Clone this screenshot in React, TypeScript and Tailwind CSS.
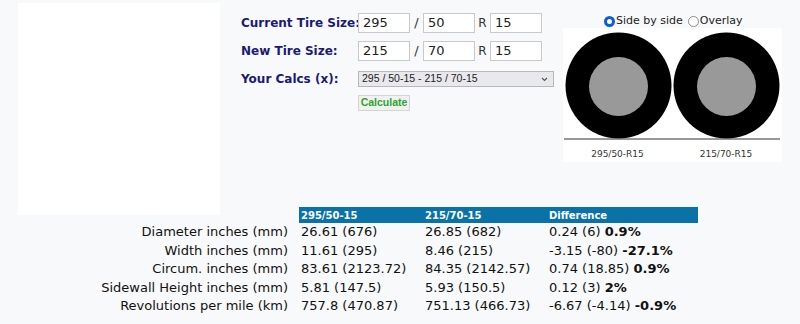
import React from "react";

const rows: { label: string; a: string; b: string; d: string; pct: string }[] = [
  { label: "Diameter inches (mm)", a: "26.61 (676)", b: "26.85 (682)", d: "0.24 (6)", pct: "0.9%" },
  { label: "Width inches (mm)", a: "11.61 (295)", b: "8.46 (215)", d: "-3.15 (-80)", pct: "-27.1%" },
  { label: "Circum. inches (mm)", a: "83.61 (2123.72)", b: "84.35 (2142.57)", d: "0.74 (18.85)", pct: "0.9%" },
  { label: "Sidewall Height inches (mm)", a: "5.81 (147.5)", b: "5.93 (150.5)", d: "0.12 (3)", pct: "2%" },
  { label: "Revolutions per mile (km)", a: "757.8 (470.87)", b: "751.13 (466.73)", d: "-6.67 (-4.14)", pct: "-0.9%" },
];

function Box({ v }: { v: string }) {
  return (
    <div className="flex h-[20px] w-[52px] items-center border border-[#c9c9c9] bg-white pl-[4px] text-[13px] text-[#222]">
      {v}
    </div>
  );
}

function SizeRow({ label, a, b, c, className }: { label: string; a: string; b: string; c: string; className?: string }) {
  return (
    <div className={"flex h-[20px] items-center " + (className ?? "")}>
      <div className="w-[117px] text-[12px] font-bold text-[#1b1b74] whitespace-nowrap">{label}</div>
      <Box v={a} />
      <div className="w-[13px] text-center text-[13px] text-[#333]">/</div>
      <Box v={b} />
      <div className="w-[15px] text-center text-[12px] text-[#333]">R</div>
      <Box v={c} />
    </div>
  );
}

export default function App() {
  return (
    <div className="h-[324px] w-[800px] overflow-hidden bg-[#f8f9fa] font-['DejaVu_Sans',Verdana,sans-serif] text-black">
      <div className="flex h-[207px] items-start">
        <div className="ml-[18px] mt-[3px] h-[212px] w-[202px] shrink-0 bg-white" />

        <div className="ml-[21px] mt-[13px] shrink-0">
          <SizeRow label="Current Tire Size:" a="295" b="50" c="15" />
          <SizeRow label="New Tire Size:" a="215" b="70" c="15" className="mt-[8px]" />
          <div className="mt-[10px] flex h-[16px] items-center">
            <div className="w-[117px] text-[12px] font-bold text-[#1b1b74] whitespace-nowrap">Your Calcs (x):</div>
            <div className="flex h-[16px] w-[196px] items-center justify-between border border-[#b8b8b8] bg-[#e9e9ed] pl-[3px] pr-[5px] font-['Liberation_Sans',Arial,sans-serif] text-[10.5px] text-[#222]">
              <span>295 / 50-15 - 215 / 70-15</span>
              <svg width="7" height="5" viewBox="0 0 7 5">
                <path d="M1 1 L3.5 3.5 L6 1" fill="none" stroke="#555" strokeWidth="1.1" />
              </svg>
            </div>
          </div>
          <div className="mt-[8px] flex">
            <div className="ml-[117px] flex h-[16px] w-[52px] items-center justify-center border border-[#d4d4d4] bg-[#f1f1f1] font-['Liberation_Sans',Arial,sans-serif] text-[10.5px] font-bold text-[#2ba52b]">
              Calculate
            </div>
          </div>
        </div>

        <div className="ml-[9px] mt-[14px] w-[219px] shrink-0">
          <div className="flex h-[14px] items-center pl-[41px] text-[11px] text-[#222]">
            <span className="h-[11px] w-[11px] rounded-full border-[3px] border-[#0b5ed7] bg-white" />
            <span className="ml-[1px]">Side by side</span>
            <span className="ml-[5px] h-[11px] w-[11px] rounded-full border border-[#8a8a8a] bg-white" />
            <span className="ml-[1px]">Overlay</span>
          </div>
          <div className="h-[134px] w-[219px] bg-white">
            <svg width="219" height="134" viewBox="0 0 219 134">
              <circle cx="55.5" cy="57.5" r="53" fill="#000" />
              <circle cx="55.5" cy="58.5" r="29.5" fill="#999" />
              <circle cx="163.5" cy="57.5" r="53" fill="#000" />
              <circle cx="163.5" cy="58.5" r="29.5" fill="#999" />
              <line x1="1" y1="111" x2="217" y2="111" stroke="#333" strokeWidth="1" />
              <text x="54.5" y="128.5" textAnchor="middle" fontSize="9" fill="#333" fontFamily="DejaVu Sans, Verdana, sans-serif">295/50-R15</text>
              <text x="163" y="128.5" textAnchor="middle" fontSize="9" fill="#333" fontFamily="DejaVu Sans, Verdana, sans-serif">215/70-R15</text>
            </svg>
          </div>
        </div>
      </div>

      <div className="relative ml-[98px] grid w-[600px] grid-cols-[201px_124px_124px_151px] text-[13px] text-[#111]">
        <div className="h-[16px]" />
        <div className="flex h-[16px] items-center bg-[#0b72a8] pl-[2px] text-[10px] font-bold text-white">295/50-15</div>
        <div className="flex h-[16px] items-center bg-[#0b72a8] pl-[2px] text-[10px] font-bold text-white">215/70-15</div>
        <div className="flex h-[16px] items-center bg-[#0b72a8] pl-[2px] text-[10px] font-bold text-white">Difference</div>
        {rows.map((r) => (
          <React.Fragment key={r.label}>
            <div className="flex h-[18.4px] items-center justify-end pr-[11px] whitespace-nowrap">{r.label}</div>
            <div className="flex h-[18.4px] items-center pl-[2px] whitespace-nowrap">{r.a}</div>
            <div className="flex h-[18.4px] items-center pl-[2px] whitespace-nowrap">{r.b}</div>
            <div className="flex h-[18.4px] items-center pl-[2px] whitespace-nowrap">
              {r.d}&nbsp;<b>{r.pct}</b>
            </div>
          </React.Fragment>
        ))}
      </div>
    </div>
  );
}
